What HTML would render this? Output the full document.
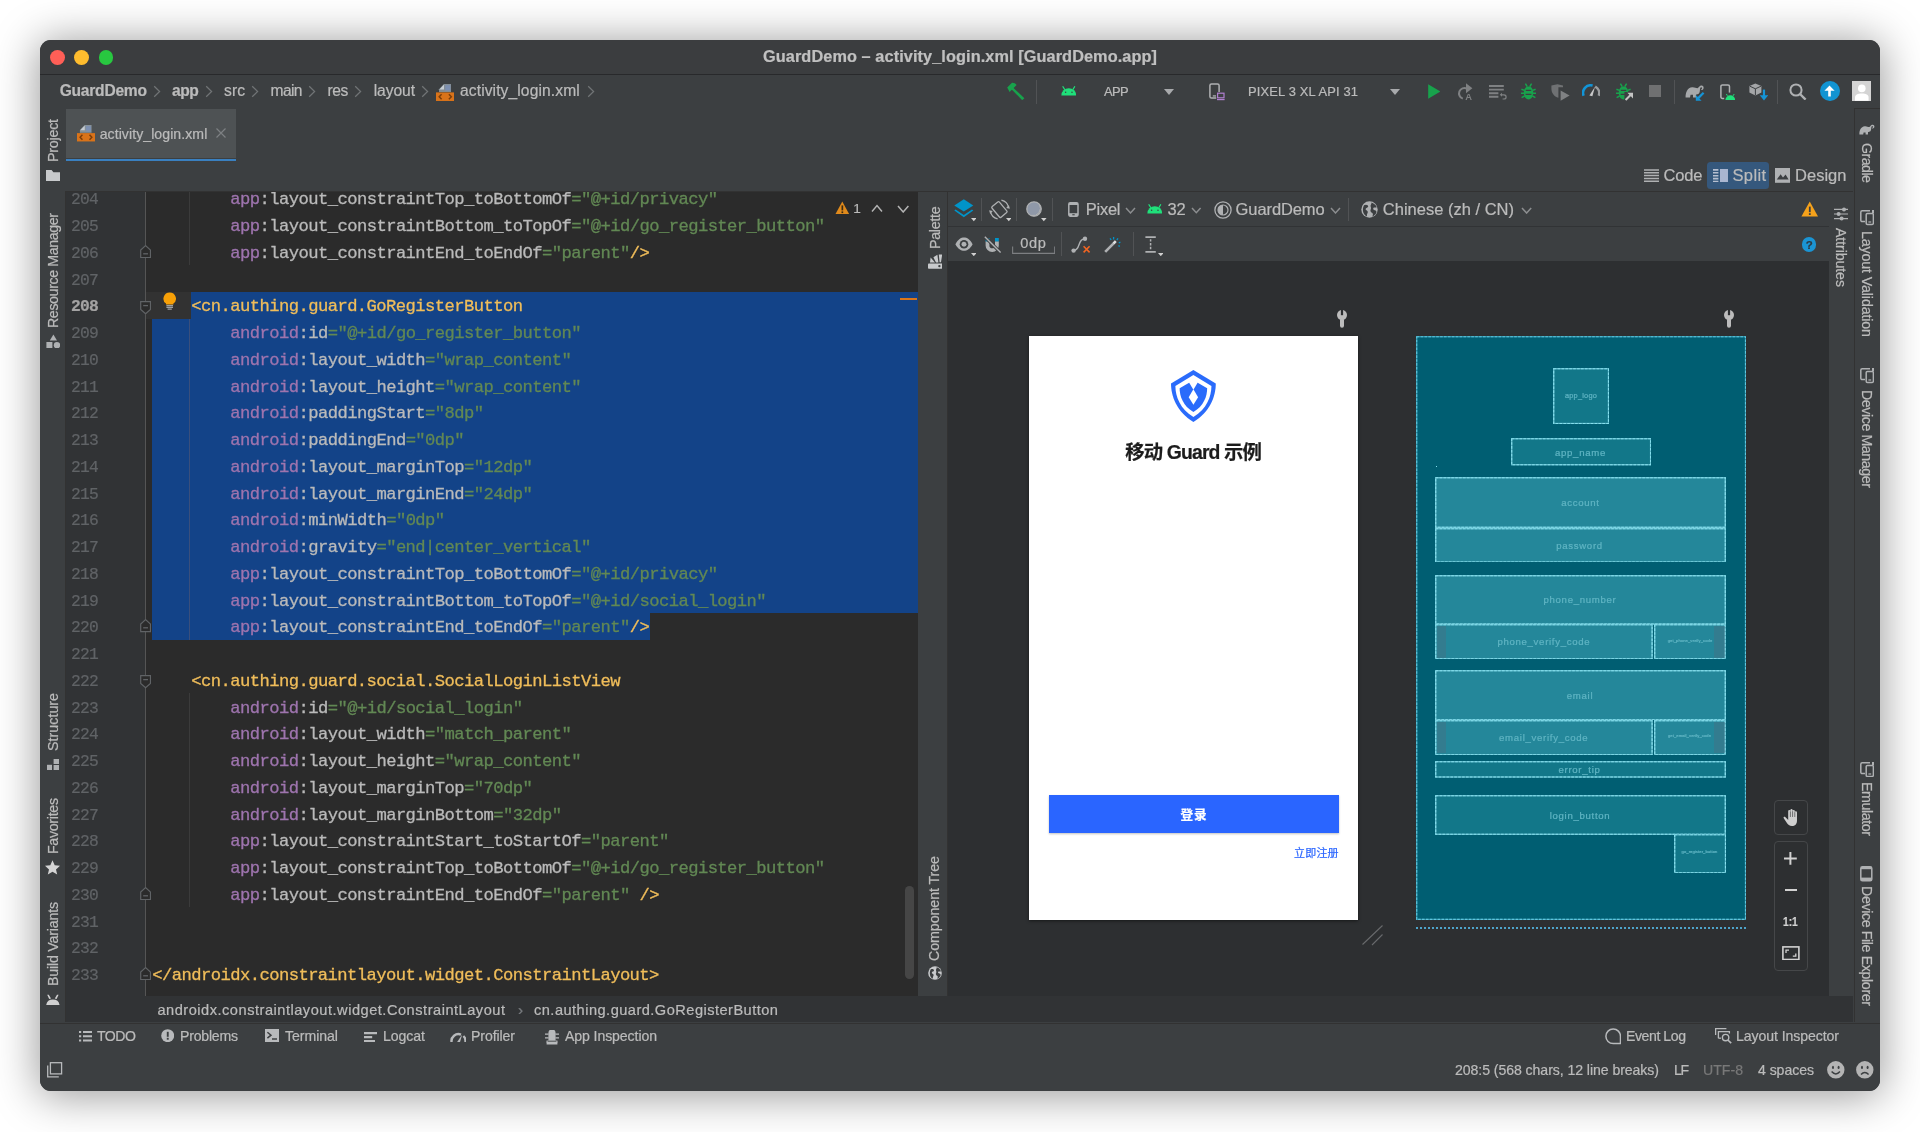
<!DOCTYPE html>
<html lang="en"><head><meta charset="utf-8"><title>GuardDemo – activity_login.xml [GuardDemo.app]</title>
<style>
html,body{margin:0;padding:0;background:#fff;}
body{width:1920px;height:1132px;position:relative;overflow:hidden;font-family:"Liberation Sans",sans-serif;}
.t{position:absolute;white-space:pre;line-height:1;-webkit-text-stroke:0.22px;}
.r{position:absolute;}
#win{position:absolute;left:40px;top:40px;width:1840px;height:1051px;border-radius:11px;background:#3c3f41;box-shadow:0 3px 44px 2px rgba(0,0,0,.40);}
#clip{position:absolute;left:40px;top:40px;width:1840px;height:1051px;border-radius:11px;overflow:hidden;}
#clip > .in{position:absolute;left:-40px;top:-40px;width:1920px;height:1132px;will-change:transform;}
</style></head><body>
<div id="win"></div>
<div id="clip"><div class="in">
<div class="r" style="left:40.00px;top:40.00px;width:1840.00px;height:34.00px;background:#3b3d3f;"></div>
<div class="r" style="left:40.00px;top:74.00px;width:1840.00px;height:1.00px;background:#28292b;"></div>
<div class="r" style="left:40.00px;top:75.00px;width:1840.00px;height:1016.00px;background:#3c3f41;"></div>
<div class="r" style="left:49.9px;top:49.9px;width:14.8px;height:14.8px;border-radius:50%;background:#ff5f57;"></div>
<div class="r" style="left:74.3px;top:49.9px;width:14.8px;height:14.8px;border-radius:50%;background:#febc2e;"></div>
<div class="r" style="left:98.7px;top:49.9px;width:14.8px;height:14.8px;border-radius:50%;background:#28c840;"></div>
<span class="t" style="left:763.00px;top:48.00px;font-size:16.3px;font-weight:700;color:#c0c0c0;font-family:'Liberation Sans', sans-serif;letter-spacing:0.090px;">GuardDemo – activity_login.xml [GuardDemo.app]</span>
<span class="t" style="left:59.70px;top:83.00px;font-size:15.6px;font-weight:700;color:#bbbbbb;font-family:'Liberation Sans', sans-serif;letter-spacing:-0.244px;">GuardDemo</span>
<span class="t" style="left:172.00px;top:83.00px;font-size:15.6px;font-weight:700;color:#bbbbbb;font-family:'Liberation Sans', sans-serif;letter-spacing:-0.517px;">app</span>
<span class="t" style="left:224.00px;top:83.00px;font-size:15.6px;font-weight:400;color:#bbbbbb;font-family:'Liberation Sans', sans-serif;letter-spacing:0.102px;">src</span>
<span class="t" style="left:270.60px;top:83.00px;font-size:15.6px;font-weight:400;color:#bbbbbb;font-family:'Liberation Sans', sans-serif;letter-spacing:-0.638px;">main</span>
<span class="t" style="left:327.50px;top:83.00px;font-size:15.6px;font-weight:400;color:#bbbbbb;font-family:'Liberation Sans', sans-serif;letter-spacing:-0.386px;">res</span>
<span class="t" style="left:373.70px;top:83.00px;font-size:15.6px;font-weight:400;color:#bbbbbb;font-family:'Liberation Sans', sans-serif;letter-spacing:-0.065px;">layout</span>
<span class="t" style="left:460.00px;top:83.00px;font-size:15.6px;font-weight:400;color:#bbbbbb;font-family:'Liberation Sans', sans-serif;letter-spacing:0.108px;">activity_login.xml</span>
<div class="r" style="left:66.00px;top:191.20px;width:851.50px;height:804.40px;background:#2b2b2b;"></div>
<div class="r" style="left:66.00px;top:191.20px;width:79.00px;height:804.40px;background:#313335;"></div>
<div class="r" style="left:145.00px;top:191.20px;width:1.40px;height:804.40px;background:#555555;"></div>
<div class="r" style="left:146.40px;top:291.90px;width:771.10px;height:26.75px;background:#323232;"></div>
<div class="r" style="left:191.25px;top:291.90px;width:726.25px;height:26.75px;background:#134388;"></div>
<div class="r" style="left:152.25px;top:318.64px;width:765.25px;height:294.19px;background:#134388;"></div>
<div class="r" style="left:152.25px;top:612.84px;width:497.25px;height:26.75px;background:#134388;"></div>
<div class="r" style="left:189.20px;top:191.20px;width:1.00px;height:73.95px;background:#3b3b3b;"></div>
<div class="r" style="left:189.20px;top:318.64px;width:1.00px;height:320.94px;background:#3a4f7c;"></div>
<div class="r" style="left:189.20px;top:693.08px;width:1.00px;height:213.96px;background:#3b3b3b;"></div>
<div class="r" style="left:66px;top:191.2px;width:851.5px;height:804.4px;overflow:hidden;"><div class="r" style="left:-66px;top:-191.2px;">
<span class="t" style="left:71px;top:192px;font-family:'Liberation Mono', monospace;font-size:16.3px;letter-spacing:-0.722px;color:#606366;">204</span>
<span class="t" style="left:230.25px;top:191px;font-family:'Liberation Mono', monospace;font-size:17.2px;letter-spacing:-0.572px;-webkit-text-stroke:0.3px;"><span style="color:#9e74ae">app</span><span style="color:#bababa">:layout_constraintTop_toBottomOf</span><span style="color:#628854">=&quot;@+id/privacy&quot;</span></span>
<span class="t" style="left:71px;top:219px;font-family:'Liberation Mono', monospace;font-size:16.3px;letter-spacing:-0.722px;color:#606366;">205</span>
<span class="t" style="left:230.25px;top:218px;font-family:'Liberation Mono', monospace;font-size:17.2px;letter-spacing:-0.572px;-webkit-text-stroke:0.3px;"><span style="color:#9e74ae">app</span><span style="color:#bababa">:layout_constraintBottom_toTopOf</span><span style="color:#628854">=&quot;@+id/go_register_button&quot;</span></span>
<span class="t" style="left:71px;top:246px;font-family:'Liberation Mono', monospace;font-size:16.3px;letter-spacing:-0.722px;color:#606366;">206</span>
<span class="t" style="left:230.25px;top:245px;font-family:'Liberation Mono', monospace;font-size:17.2px;letter-spacing:-0.572px;-webkit-text-stroke:0.3px;"><span style="color:#9e74ae">app</span><span style="color:#bababa">:layout_constraintEnd_toEndOf</span><span style="color:#628854">=&quot;parent&quot;</span><span style="color:#f0bd5a">/></span></span>
<span class="t" style="left:71px;top:273px;font-family:'Liberation Mono', monospace;font-size:16.3px;letter-spacing:-0.722px;color:#606366;">207</span>
<span class="t" style="left:71px;top:299px;font-family:'Liberation Mono', monospace;font-size:16.3px;letter-spacing:-0.722px;color:#a4a3a3;font-weight:700;">208</span>
<span class="t" style="left:191.25px;top:298px;font-family:'Liberation Mono', monospace;font-size:17.2px;letter-spacing:-0.572px;-webkit-text-stroke:0.3px;"><span style="color:#f0bd5a">&lt;cn.authing.guard.GoRegisterButton</span></span>
<span class="t" style="left:71px;top:326px;font-family:'Liberation Mono', monospace;font-size:16.3px;letter-spacing:-0.722px;color:#606366;">209</span>
<span class="t" style="left:230.25px;top:325px;font-family:'Liberation Mono', monospace;font-size:17.2px;letter-spacing:-0.572px;-webkit-text-stroke:0.3px;"><span style="color:#9e74ae">android</span><span style="color:#bababa">:id</span><span style="color:#628854">=&quot;@+id/go_register_button&quot;</span></span>
<span class="t" style="left:71px;top:353px;font-family:'Liberation Mono', monospace;font-size:16.3px;letter-spacing:-0.722px;color:#606366;">210</span>
<span class="t" style="left:230.25px;top:352px;font-family:'Liberation Mono', monospace;font-size:17.2px;letter-spacing:-0.572px;-webkit-text-stroke:0.3px;"><span style="color:#9e74ae">android</span><span style="color:#bababa">:layout_width</span><span style="color:#628854">=&quot;wrap_content&quot;</span></span>
<span class="t" style="left:71px;top:380px;font-family:'Liberation Mono', monospace;font-size:16.3px;letter-spacing:-0.722px;color:#606366;">211</span>
<span class="t" style="left:230.25px;top:379px;font-family:'Liberation Mono', monospace;font-size:17.2px;letter-spacing:-0.572px;-webkit-text-stroke:0.3px;"><span style="color:#9e74ae">android</span><span style="color:#bababa">:layout_height</span><span style="color:#628854">=&quot;wrap_content&quot;</span></span>
<span class="t" style="left:71px;top:406px;font-family:'Liberation Mono', monospace;font-size:16.3px;letter-spacing:-0.722px;color:#606366;">212</span>
<span class="t" style="left:230.25px;top:405px;font-family:'Liberation Mono', monospace;font-size:17.2px;letter-spacing:-0.572px;-webkit-text-stroke:0.3px;"><span style="color:#9e74ae">android</span><span style="color:#bababa">:paddingStart</span><span style="color:#628854">=&quot;8dp&quot;</span></span>
<span class="t" style="left:71px;top:433px;font-family:'Liberation Mono', monospace;font-size:16.3px;letter-spacing:-0.722px;color:#606366;">213</span>
<span class="t" style="left:230.25px;top:432px;font-family:'Liberation Mono', monospace;font-size:17.2px;letter-spacing:-0.572px;-webkit-text-stroke:0.3px;"><span style="color:#9e74ae">android</span><span style="color:#bababa">:paddingEnd</span><span style="color:#628854">=&quot;0dp&quot;</span></span>
<span class="t" style="left:71px;top:460px;font-family:'Liberation Mono', monospace;font-size:16.3px;letter-spacing:-0.722px;color:#606366;">214</span>
<span class="t" style="left:230.25px;top:459px;font-family:'Liberation Mono', monospace;font-size:17.2px;letter-spacing:-0.572px;-webkit-text-stroke:0.3px;"><span style="color:#9e74ae">android</span><span style="color:#bababa">:layout_marginTop</span><span style="color:#628854">=&quot;12dp&quot;</span></span>
<span class="t" style="left:71px;top:487px;font-family:'Liberation Mono', monospace;font-size:16.3px;letter-spacing:-0.722px;color:#606366;">215</span>
<span class="t" style="left:230.25px;top:486px;font-family:'Liberation Mono', monospace;font-size:17.2px;letter-spacing:-0.572px;-webkit-text-stroke:0.3px;"><span style="color:#9e74ae">android</span><span style="color:#bababa">:layout_marginEnd</span><span style="color:#628854">=&quot;24dp&quot;</span></span>
<span class="t" style="left:71px;top:513px;font-family:'Liberation Mono', monospace;font-size:16.3px;letter-spacing:-0.722px;color:#606366;">216</span>
<span class="t" style="left:230.25px;top:512px;font-family:'Liberation Mono', monospace;font-size:17.2px;letter-spacing:-0.572px;-webkit-text-stroke:0.3px;"><span style="color:#9e74ae">android</span><span style="color:#bababa">:minWidth</span><span style="color:#628854">=&quot;0dp&quot;</span></span>
<span class="t" style="left:71px;top:540px;font-family:'Liberation Mono', monospace;font-size:16.3px;letter-spacing:-0.722px;color:#606366;">217</span>
<span class="t" style="left:230.25px;top:539px;font-family:'Liberation Mono', monospace;font-size:17.2px;letter-spacing:-0.572px;-webkit-text-stroke:0.3px;"><span style="color:#9e74ae">android</span><span style="color:#bababa">:gravity</span><span style="color:#628854">=&quot;end|center_vertical&quot;</span></span>
<span class="t" style="left:71px;top:567px;font-family:'Liberation Mono', monospace;font-size:16.3px;letter-spacing:-0.722px;color:#606366;">218</span>
<span class="t" style="left:230.25px;top:566px;font-family:'Liberation Mono', monospace;font-size:17.2px;letter-spacing:-0.572px;-webkit-text-stroke:0.3px;"><span style="color:#9e74ae">app</span><span style="color:#bababa">:layout_constraintTop_toBottomOf</span><span style="color:#628854">=&quot;@+id/privacy&quot;</span></span>
<span class="t" style="left:71px;top:594px;font-family:'Liberation Mono', monospace;font-size:16.3px;letter-spacing:-0.722px;color:#606366;">219</span>
<span class="t" style="left:230.25px;top:593px;font-family:'Liberation Mono', monospace;font-size:17.2px;letter-spacing:-0.572px;-webkit-text-stroke:0.3px;"><span style="color:#9e74ae">app</span><span style="color:#bababa">:layout_constraintBottom_toTopOf</span><span style="color:#628854">=&quot;@+id/social_login&quot;</span></span>
<span class="t" style="left:71px;top:620px;font-family:'Liberation Mono', monospace;font-size:16.3px;letter-spacing:-0.722px;color:#606366;">220</span>
<span class="t" style="left:230.25px;top:619px;font-family:'Liberation Mono', monospace;font-size:17.2px;letter-spacing:-0.572px;-webkit-text-stroke:0.3px;"><span style="color:#9e74ae">app</span><span style="color:#bababa">:layout_constraintEnd_toEndOf</span><span style="color:#628854">=&quot;parent&quot;</span><span style="color:#f0bd5a">/></span></span>
<span class="t" style="left:71px;top:647px;font-family:'Liberation Mono', monospace;font-size:16.3px;letter-spacing:-0.722px;color:#606366;">221</span>
<span class="t" style="left:71px;top:674px;font-family:'Liberation Mono', monospace;font-size:16.3px;letter-spacing:-0.722px;color:#606366;">222</span>
<span class="t" style="left:191.25px;top:673px;font-family:'Liberation Mono', monospace;font-size:17.2px;letter-spacing:-0.572px;-webkit-text-stroke:0.3px;"><span style="color:#f0bd5a">&lt;cn.authing.guard.social.SocialLoginListView</span></span>
<span class="t" style="left:71px;top:701px;font-family:'Liberation Mono', monospace;font-size:16.3px;letter-spacing:-0.722px;color:#606366;">223</span>
<span class="t" style="left:230.25px;top:700px;font-family:'Liberation Mono', monospace;font-size:17.2px;letter-spacing:-0.572px;-webkit-text-stroke:0.3px;"><span style="color:#9e74ae">android</span><span style="color:#bababa">:id</span><span style="color:#628854">=&quot;@+id/social_login&quot;</span></span>
<span class="t" style="left:71px;top:727px;font-family:'Liberation Mono', monospace;font-size:16.3px;letter-spacing:-0.722px;color:#606366;">224</span>
<span class="t" style="left:230.25px;top:726px;font-family:'Liberation Mono', monospace;font-size:17.2px;letter-spacing:-0.572px;-webkit-text-stroke:0.3px;"><span style="color:#9e74ae">android</span><span style="color:#bababa">:layout_width</span><span style="color:#628854">=&quot;match_parent&quot;</span></span>
<span class="t" style="left:71px;top:754px;font-family:'Liberation Mono', monospace;font-size:16.3px;letter-spacing:-0.722px;color:#606366;">225</span>
<span class="t" style="left:230.25px;top:753px;font-family:'Liberation Mono', monospace;font-size:17.2px;letter-spacing:-0.572px;-webkit-text-stroke:0.3px;"><span style="color:#9e74ae">android</span><span style="color:#bababa">:layout_height</span><span style="color:#628854">=&quot;wrap_content&quot;</span></span>
<span class="t" style="left:71px;top:781px;font-family:'Liberation Mono', monospace;font-size:16.3px;letter-spacing:-0.722px;color:#606366;">226</span>
<span class="t" style="left:230.25px;top:780px;font-family:'Liberation Mono', monospace;font-size:17.2px;letter-spacing:-0.572px;-webkit-text-stroke:0.3px;"><span style="color:#9e74ae">android</span><span style="color:#bababa">:layout_marginTop</span><span style="color:#628854">=&quot;70dp&quot;</span></span>
<span class="t" style="left:71px;top:808px;font-family:'Liberation Mono', monospace;font-size:16.3px;letter-spacing:-0.722px;color:#606366;">227</span>
<span class="t" style="left:230.25px;top:807px;font-family:'Liberation Mono', monospace;font-size:17.2px;letter-spacing:-0.572px;-webkit-text-stroke:0.3px;"><span style="color:#9e74ae">android</span><span style="color:#bababa">:layout_marginBottom</span><span style="color:#628854">=&quot;32dp&quot;</span></span>
<span class="t" style="left:71px;top:834px;font-family:'Liberation Mono', monospace;font-size:16.3px;letter-spacing:-0.722px;color:#606366;">228</span>
<span class="t" style="left:230.25px;top:833px;font-family:'Liberation Mono', monospace;font-size:17.2px;letter-spacing:-0.572px;-webkit-text-stroke:0.3px;"><span style="color:#9e74ae">app</span><span style="color:#bababa">:layout_constraintStart_toStartOf</span><span style="color:#628854">=&quot;parent&quot;</span></span>
<span class="t" style="left:71px;top:861px;font-family:'Liberation Mono', monospace;font-size:16.3px;letter-spacing:-0.722px;color:#606366;">229</span>
<span class="t" style="left:230.25px;top:860px;font-family:'Liberation Mono', monospace;font-size:17.2px;letter-spacing:-0.572px;-webkit-text-stroke:0.3px;"><span style="color:#9e74ae">app</span><span style="color:#bababa">:layout_constraintTop_toBottomOf</span><span style="color:#628854">=&quot;@+id/go_register_button&quot;</span></span>
<span class="t" style="left:71px;top:888px;font-family:'Liberation Mono', monospace;font-size:16.3px;letter-spacing:-0.722px;color:#606366;">230</span>
<span class="t" style="left:230.25px;top:887px;font-family:'Liberation Mono', monospace;font-size:17.2px;letter-spacing:-0.572px;-webkit-text-stroke:0.3px;"><span style="color:#9e74ae">app</span><span style="color:#bababa">:layout_constraintEnd_toEndOf</span><span style="color:#628854">=&quot;parent&quot;</span><span style="color:#f0bd5a"> /></span></span>
<span class="t" style="left:71px;top:915px;font-family:'Liberation Mono', monospace;font-size:16.3px;letter-spacing:-0.722px;color:#606366;">231</span>
<span class="t" style="left:71px;top:941px;font-family:'Liberation Mono', monospace;font-size:16.3px;letter-spacing:-0.722px;color:#606366;">232</span>
<span class="t" style="left:71px;top:968px;font-family:'Liberation Mono', monospace;font-size:16.3px;letter-spacing:-0.722px;color:#606366;">233</span>
<span class="t" style="left:152.25px;top:967px;font-family:'Liberation Mono', monospace;font-size:17.2px;letter-spacing:-0.572px;-webkit-text-stroke:0.3px;"><span style="color:#f0bd5a">&lt;/androidx.constraintlayout.widget.ConstraintLayout&gt;</span></span>
</div></div>
<div class="r" style="left:40.00px;top:109.00px;width:25.50px;height:913.50px;background:#3c3f41;"></div>
<div class="r" style="left:65.30px;top:191.20px;width:1.00px;height:831.30px;background:#323232;"></div>
<span class="t" style="left:52.50px;top:162.00px;font-size:14.2px;font-weight:400;color:#bbbbbb;letter-spacing:-0.193px;line-height:14.2px;transform-origin:0 0;transform:rotate(-90deg) translateY(-50%);">Project</span>
<span class="t" style="left:52.50px;top:327.50px;font-size:14.2px;font-weight:400;color:#bbbbbb;letter-spacing:-0.377px;line-height:14.2px;transform-origin:0 0;transform:rotate(-90deg) translateY(-50%);">Resource Manager</span>
<span class="t" style="left:52.50px;top:751.00px;font-size:14.2px;font-weight:400;color:#bbbbbb;letter-spacing:0.055px;line-height:14.2px;transform-origin:0 0;transform:rotate(-90deg) translateY(-50%);">Structure</span>
<span class="t" style="left:52.50px;top:854.00px;font-size:14.2px;font-weight:400;color:#bbbbbb;letter-spacing:-0.293px;line-height:14.2px;transform-origin:0 0;transform:rotate(-90deg) translateY(-50%);">Favorites</span>
<span class="t" style="left:52.50px;top:986.00px;font-size:14.2px;font-weight:400;color:#bbbbbb;letter-spacing:-0.191px;line-height:14.2px;transform-origin:0 0;transform:rotate(-90deg) translateY(-50%);">Build Variants</span>
<div class="r" style="left:1854.00px;top:108.40px;width:26.00px;height:0.80px;background:#323232;"></div>
<div class="r" style="left:66.30px;top:109.20px;width:169.70px;height:49.10px;background:#4e5254;"></div>
<div class="r" style="left:66.30px;top:158.50px;width:169.70px;height:2.10px;background:#3a80c0;"></div>
<span class="t" style="left:99.70px;top:127.00px;font-size:14.1px;font-weight:400;color:#bbbbbb;font-family:'Liberation Sans', sans-serif;letter-spacing:0.063px;">activity_login.xml</span>
<svg class="r" style="left:215.00px;top:127.00px;" width="12" height="12" viewBox="0 0 12 12"><path d="M1.5 1.5L10.5 10.5M10.5 1.5L1.5 10.5" stroke="#7d8083" stroke-width="1.2" fill="none"/></svg>
<div class="r" style="left:1707.00px;top:161.80px;width:62.00px;height:26.80px;background:#35587d;border-radius:3.5px;"></div>
<span class="t" style="left:1663.50px;top:167.00px;font-size:16.5px;font-weight:400;color:#bbbbbb;font-family:'Liberation Sans', sans-serif;letter-spacing:-0.151px;">Code</span>
<span class="t" style="left:1732.50px;top:167.00px;font-size:16.5px;font-weight:400;color:#bbbbbb;font-family:'Liberation Sans', sans-serif;letter-spacing:0.348px;">Split</span>
<span class="t" style="left:1795.00px;top:167.00px;font-size:16.5px;font-weight:400;color:#bbbbbb;font-family:'Liberation Sans', sans-serif;letter-spacing:0.025px;">Design</span>
<div class="r" style="left:917.50px;top:191.20px;width:29.00px;height:804.40px;background:#3c3f41;"></div>
<div class="r" style="left:946.50px;top:191.20px;width:1.00px;height:804.40px;background:#323232;"></div>
<span class="t" style="left:934.60px;top:248.70px;font-size:14.2px;font-weight:400;color:#bbbbbb;letter-spacing:-0.245px;line-height:14.2px;transform-origin:0 0;transform:rotate(-90deg) translateY(-50%);">Palette</span>
<span class="t" style="left:934.00px;top:961.00px;font-size:14.2px;font-weight:400;color:#bbbbbb;letter-spacing:-0.053px;line-height:14.2px;transform-origin:0 0;transform:rotate(-90deg) translateY(-50%);">Component Tree</span>
<div class="r" style="left:947.50px;top:191.20px;width:881.00px;height:35.30px;background:#3c3f41;"></div>
<div class="r" style="left:947.50px;top:225.80px;width:881.00px;height:1.50px;background:#313335;"></div>
<div class="r" style="left:947.50px;top:227.30px;width:881.00px;height:33.70px;background:#3c3f41;"></div>
<div class="r" style="left:947.50px;top:261.00px;width:881.00px;height:734.60px;background:#2d2f31;"></div>
<div class="r" style="left:1828.50px;top:191.20px;width:0.80px;height:804.40px;background:#323232;"></div>
<div class="r" style="left:1829.30px;top:191.20px;width:24.20px;height:804.40px;background:#3c3f41;"></div>
<div class="r" style="left:1853.50px;top:109.20px;width:0.90px;height:913.30px;background:#323232;"></div>
<span class="t" style="left:1840.60px;top:228.00px;font-size:14.2px;font-weight:400;color:#bbbbbb;letter-spacing:-0.104px;line-height:14.2px;transform-origin:0 0;transform:rotate(90deg) translateY(-50%);">Attributes</span>
<span class="t" style="left:1867.00px;top:143.00px;font-size:14.2px;font-weight:400;color:#bbbbbb;letter-spacing:-0.519px;line-height:14.2px;transform-origin:0 0;transform:rotate(90deg) translateY(-50%);">Gradle</span>
<span class="t" style="left:1867.00px;top:231.00px;font-size:14.2px;font-weight:400;color:#bbbbbb;letter-spacing:-0.113px;line-height:14.2px;transform-origin:0 0;transform:rotate(90deg) translateY(-50%);">Layout Validation</span>
<span class="t" style="left:1867.00px;top:390.00px;font-size:14.2px;font-weight:400;color:#bbbbbb;letter-spacing:-0.409px;line-height:14.2px;transform-origin:0 0;transform:rotate(90deg) translateY(-50%);">Device Manager</span>
<span class="t" style="left:1867.00px;top:782.00px;font-size:14.2px;font-weight:400;color:#bbbbbb;letter-spacing:-0.397px;line-height:14.2px;transform-origin:0 0;transform:rotate(90deg) translateY(-50%);">Emulator</span>
<span class="t" style="left:1867.00px;top:886.00px;font-size:14.2px;font-weight:400;color:#bbbbbb;letter-spacing:-0.366px;line-height:14.2px;transform-origin:0 0;transform:rotate(90deg) translateY(-50%);">Device File Explorer</span>
<div class="r" style="left:66.30px;top:995.60px;width:1787.20px;height:26.90px;background:#313335;"></div>
<span class="t" style="left:157.40px;top:1003.00px;font-size:14.6px;font-weight:400;color:#bbbbbb;font-family:'Liberation Sans', sans-serif;letter-spacing:0.515px;">androidx.constraintlayout.widget.ConstraintLayout</span>
<span class="t" style="left:534.00px;top:1003.00px;font-size:14.6px;font-weight:400;color:#bbbbbb;font-family:'Liberation Sans', sans-serif;letter-spacing:0.475px;">cn.authing.guard.GoRegisterButton</span>
<span class="t" style="left:518.00px;top:1002.00px;font-size:15.3px;font-weight:400;color:#7a7d80;font-family:'Liberation Sans', sans-serif;letter-spacing:0.000px;">›</span>
<div class="r" style="left:40.00px;top:1022.50px;width:1840.00px;height:0.80px;background:#323232;"></div>
<span class="t" style="left:97.00px;top:1029.00px;font-size:14.1px;font-weight:400;color:#bbbbbb;font-family:'Liberation Sans', sans-serif;letter-spacing:-0.490px;">TODO</span>
<span class="t" style="left:180.00px;top:1029.00px;font-size:14.1px;font-weight:400;color:#bbbbbb;font-family:'Liberation Sans', sans-serif;letter-spacing:-0.219px;">Problems</span>
<span class="t" style="left:285.00px;top:1029.00px;font-size:14.1px;font-weight:400;color:#bbbbbb;font-family:'Liberation Sans', sans-serif;letter-spacing:-0.038px;">Terminal</span>
<span class="t" style="left:383.00px;top:1029.00px;font-size:14.1px;font-weight:400;color:#bbbbbb;font-family:'Liberation Sans', sans-serif;letter-spacing:-0.066px;">Logcat</span>
<span class="t" style="left:471.00px;top:1029.00px;font-size:14.1px;font-weight:400;color:#bbbbbb;font-family:'Liberation Sans', sans-serif;letter-spacing:-0.094px;">Profiler</span>
<span class="t" style="left:565.00px;top:1029.00px;font-size:14.1px;font-weight:400;color:#bbbbbb;font-family:'Liberation Sans', sans-serif;letter-spacing:-0.096px;">App Inspection</span>
<span class="t" style="left:1626.00px;top:1029.00px;font-size:14.1px;font-weight:400;color:#bbbbbb;font-family:'Liberation Sans', sans-serif;letter-spacing:-0.436px;">Event Log</span>
<span class="t" style="left:1736.00px;top:1029.00px;font-size:14.1px;font-weight:400;color:#bbbbbb;font-family:'Liberation Sans', sans-serif;letter-spacing:-0.080px;">Layout Inspector</span>
<span class="t" style="left:1455.00px;top:1063.00px;font-size:14.1px;font-weight:400;color:#bbbbbb;font-family:'Liberation Sans', sans-serif;letter-spacing:-0.064px;">208:5 (568 chars, 12 line breaks)</span>
<span class="t" style="left:1674.00px;top:1063.00px;font-size:14.1px;font-weight:400;color:#bbbbbb;font-family:'Liberation Sans', sans-serif;letter-spacing:-1.453px;">LF</span>
<span class="t" style="left:1703.00px;top:1063.00px;font-size:14.1px;font-weight:400;color:#787878;font-family:'Liberation Sans', sans-serif;letter-spacing:0.016px;">UTF-8</span>
<span class="t" style="left:1758.00px;top:1063.00px;font-size:14.1px;font-weight:400;color:#bbbbbb;font-family:'Liberation Sans', sans-serif;letter-spacing:-0.060px;">4 spaces</span>
<div class="r" style="left:1029.00px;top:336.30px;width:329.30px;height:584.10px;background:#ffffff;box-shadow:0 1px 3px rgba(0,0,0,.5);"></div>
<svg class="r" style="left:1171.20px;top:369.80px;" width="44.8" height="52" viewBox="620 172 390 453"><path d="M815 172L1010 290C1010 400 960 540 815 625C670 540 620 400 620 290Z" fill="#2a6bfb"/>
<path d="M815 216L972 311C972 400 932 512 815 581C698 512 658 400 658 311Z" fill="#fff"/>
<path d="M815 262L935 332C935 400 905 488 815 538C725 488 695 400 695 332Z" fill="#2a6bfb"/>
<path d="M776 278L815 345L854 278L815 250Z" fill="#fff"/>
<path d="M815 340L856 410L815 474L774 410Z" fill="#fff"/></svg>
<span class="t" style="left:1125.30px;top:443.00px;font-size:19.4px;font-weight:700;color:#1c1c1c;font-family:'Liberation Sans', 'Noto Sans CJK SC', sans-serif;letter-spacing:-0.875px;">移动 Guard 示例</span>
<div class="r" style="left:1048.60px;top:795.40px;width:290.20px;height:38.00px;background:#2a65ff;box-shadow:0 1px 2px rgba(0,0,0,.25);"></div>
<span class="t" style="left:1180.50px;top:809.00px;font-size:12.6px;font-weight:700;color:#ffffff;font-family:'Liberation Sans', 'Noto Sans CJK SC', sans-serif;letter-spacing:0.812px;">登录</span>
<span class="t" style="left:1294.00px;top:848.00px;font-size:11px;font-weight:400;color:#2a65ff;font-family:'Liberation Sans', 'Noto Sans CJK SC', sans-serif;letter-spacing:0.200px;">立即注册</span>
<svg class="r" style="left:1337.20px;top:309.50px;" width="10" height="18" viewBox="0 0 10 18"><circle cx="5" cy="5.1" r="5" fill="#bcbcbc"/><rect x="3.9" y="-1" width="2.2" height="6.2" fill="#2d2f31"/><rect x="3" y="8" width="4" height="9.8" rx="2" fill="#bcbcbc"/></svg>
<svg class="r" style="left:1723.90px;top:309.50px;" width="10" height="18" viewBox="0 0 10 18"><circle cx="5" cy="5.1" r="5" fill="#bcbcbc"/><rect x="3.9" y="-1" width="2.2" height="6.2" fill="#2d2f31"/><rect x="3" y="8" width="4" height="9.8" rx="2" fill="#bcbcbc"/></svg>
<svg class="r" style="left:1360.00px;top:923.00px;" width="26" height="26" viewBox="0 0 26 26"><path d="M2.5 21.5L22.5 2.5M12 22L22.5 11.5" stroke="#686a6c" stroke-width="1.1" fill="none"/></svg>
<div class="r" style="left:1415.80px;top:336.30px;width:330.20px;height:584.10px;background:#005e72;"></div>
<svg class="r" style="left:1415.8px;top:336.3px;" width="330.2" height="584.1"><rect x="0.7" y="0.7" width="328.8" height="582.7" fill="none" stroke="rgba(80,180,205,.6)" stroke-width="1.3"/><rect x="0.7" y="0.7" width="328.8" height="582.7" fill="none" stroke="#5fc6de" stroke-width="1.1" stroke-dasharray="2.6 1.3"/></svg>
<svg class="r" style="left:1553.20px;top:367.90px;" width="56.20" height="56.20"><rect x="0" y="0" width="56.20" height="56.20" fill="#127789"/><rect x="0.7" y="0.7" width="54.80" height="54.80" fill="none" stroke="rgba(150,232,245,.55)" stroke-width="1.4"/><rect x="0.7" y="0.7" width="54.80" height="54.80" fill="none" stroke="#86e0ee" stroke-width="1.1" stroke-dasharray="2.6 1.3"/></svg>
<span class="t" style="left:1431.00px;width:300px;text-align:center;top:391.86px;font-size:7.4px;color:#5fb4c3;letter-spacing:0.2px;">app_logo</span>
<svg class="r" style="left:1510.60px;top:438.40px;" width="140.30" height="27.40"><rect x="0" y="0" width="140.30" height="27.40" fill="#127789"/><rect x="0.7" y="0.7" width="138.90" height="26.00" fill="none" stroke="rgba(150,232,245,.55)" stroke-width="1.4"/><rect x="0.7" y="0.7" width="138.90" height="26.00" fill="none" stroke="#86e0ee" stroke-width="1.1" stroke-dasharray="2.6 1.3"/></svg>
<span class="t" style="left:1430.50px;width:300px;text-align:center;top:447.62px;font-size:9.6px;color:#5fb4c3;letter-spacing:0.7px;">app_name</span>
<svg class="r" style="left:1435.20px;top:477.40px;" width="291.00" height="51.00"><rect x="0" y="0" width="291.00" height="51.00" fill="#24879a"/><rect x="0.7" y="0.7" width="289.60" height="49.60" fill="none" stroke="rgba(150,232,245,.55)" stroke-width="1.4"/><rect x="0.7" y="0.7" width="289.60" height="49.60" fill="none" stroke="#86e0ee" stroke-width="1.1" stroke-dasharray="2.6 1.3"/></svg>
<span class="t" style="left:1430.50px;width:300px;text-align:center;top:497.92px;font-size:9.6px;color:#5fb4c3;letter-spacing:0.7px;">account</span>
<svg class="r" style="left:1435.20px;top:527.60px;" width="291.00" height="34.70"><rect x="0" y="0" width="291.00" height="34.70" fill="#24879a"/><rect x="0.7" y="0.7" width="289.60" height="33.30" fill="none" stroke="rgba(150,232,245,.55)" stroke-width="1.4"/><rect x="0.7" y="0.7" width="289.60" height="33.30" fill="none" stroke="#86e0ee" stroke-width="1.1" stroke-dasharray="2.6 1.3"/></svg>
<span class="t" style="left:1429.50px;width:300px;text-align:center;top:540.62px;font-size:9.6px;color:#5fb4c3;letter-spacing:0.7px;">password</span>
<svg class="r" style="left:1435.20px;top:575.00px;" width="291.00" height="49.70"><rect x="0" y="0" width="291.00" height="49.70" fill="#24879a"/><rect x="0.7" y="0.7" width="289.60" height="48.30" fill="none" stroke="rgba(150,232,245,.55)" stroke-width="1.4"/><rect x="0.7" y="0.7" width="289.60" height="48.30" fill="none" stroke="#86e0ee" stroke-width="1.1" stroke-dasharray="2.6 1.3"/></svg>
<span class="t" style="left:1430.00px;width:300px;text-align:center;top:595.42px;font-size:9.6px;color:#5fb4c3;letter-spacing:0.7px;">phone_number</span>
<svg class="r" style="left:1435.20px;top:623.90px;" width="217.80" height="35.50"><rect x="0" y="0" width="217.80" height="35.50" fill="#24879a"/><rect x="0.7" y="0.7" width="216.40" height="34.10" fill="none" stroke="rgba(150,232,245,.55)" stroke-width="1.4"/><rect x="0.7" y="0.7" width="216.40" height="34.10" fill="none" stroke="#86e0ee" stroke-width="1.1" stroke-dasharray="2.6 1.3"/></svg>
<span class="t" style="left:1393.90px;width:300px;text-align:center;top:637.12px;font-size:9.6px;color:#5fb4c3;letter-spacing:0.7px;">phone_verify_code</span>
<svg class="r" style="left:1654.40px;top:623.90px;" width="71.80" height="35.50"><rect x="0" y="0" width="71.80" height="35.50" fill="#24879a"/><rect x="0.7" y="0.7" width="70.40" height="34.10" fill="none" stroke="rgba(150,232,245,.55)" stroke-width="1.4"/><rect x="0.7" y="0.7" width="70.40" height="34.10" fill="none" stroke="#86e0ee" stroke-width="1.1" stroke-dasharray="2.6 1.3"/></svg>
<span class="t" style="left:1540.00px;width:300px;text-align:center;top:638.70px;font-size:4.1px;color:#5fb4c3;letter-spacing:0.1px;">get_phone_verify_code</span>
<div class="r" style="left:1437.00px;top:626.00px;width:9.00px;height:32.00px;background:rgba(70,110,130,.45);"></div>
<div class="r" style="left:1714.00px;top:626.00px;width:10.50px;height:32.00px;background:rgba(70,110,130,.45);"></div>
<svg class="r" style="left:1435.20px;top:669.70px;" width="291.00" height="50.60"><rect x="0" y="0" width="291.00" height="50.60" fill="#24879a"/><rect x="0.7" y="0.7" width="289.60" height="49.20" fill="none" stroke="rgba(150,232,245,.55)" stroke-width="1.4"/><rect x="0.7" y="0.7" width="289.60" height="49.20" fill="none" stroke="#86e0ee" stroke-width="1.1" stroke-dasharray="2.6 1.3"/></svg>
<span class="t" style="left:1430.00px;width:300px;text-align:center;top:690.62px;font-size:9.6px;color:#5fb4c3;letter-spacing:0.7px;">email</span>
<svg class="r" style="left:1435.20px;top:719.50px;" width="217.80" height="35.40"><rect x="0" y="0" width="217.80" height="35.40" fill="#24879a"/><rect x="0.7" y="0.7" width="216.40" height="34.00" fill="none" stroke="rgba(150,232,245,.55)" stroke-width="1.4"/><rect x="0.7" y="0.7" width="216.40" height="34.00" fill="none" stroke="#86e0ee" stroke-width="1.1" stroke-dasharray="2.6 1.3"/></svg>
<span class="t" style="left:1393.70px;width:300px;text-align:center;top:733.12px;font-size:9.6px;color:#5fb4c3;letter-spacing:0.7px;">email_verify_code</span>
<svg class="r" style="left:1654.40px;top:719.50px;" width="71.80" height="35.40"><rect x="0" y="0" width="71.80" height="35.40" fill="#24879a"/><rect x="0.7" y="0.7" width="70.40" height="34.00" fill="none" stroke="rgba(150,232,245,.55)" stroke-width="1.4"/><rect x="0.7" y="0.7" width="70.40" height="34.00" fill="none" stroke="#86e0ee" stroke-width="1.1" stroke-dasharray="2.6 1.3"/></svg>
<span class="t" style="left:1539.50px;width:300px;text-align:center;top:734.40px;font-size:4.1px;color:#5fb4c3;letter-spacing:0.1px;">get_email_verify_code</span>
<div class="r" style="left:1437.00px;top:721.50px;width:9.00px;height:31.50px;background:rgba(70,110,130,.45);"></div>
<div class="r" style="left:1714.00px;top:721.50px;width:10.50px;height:31.50px;background:rgba(70,110,130,.45);"></div>
<svg class="r" style="left:1435.20px;top:761.00px;" width="291.00" height="16.70"><rect x="0" y="0" width="291.00" height="16.70" fill="#127789"/><rect x="0.7" y="0.7" width="289.60" height="15.30" fill="none" stroke="rgba(150,232,245,.55)" stroke-width="1.4"/><rect x="0.7" y="0.7" width="289.60" height="15.30" fill="none" stroke="#86e0ee" stroke-width="1.1" stroke-dasharray="2.6 1.3"/></svg>
<span class="t" style="left:1429.50px;width:300px;text-align:center;top:764.62px;font-size:9.6px;color:#5fb4c3;letter-spacing:0.7px;">error_tip</span>
<svg class="r" style="left:1435.20px;top:795.00px;" width="291.00" height="40.00"><rect x="0" y="0" width="291.00" height="40.00" fill="#127789"/><rect x="0.7" y="0.7" width="289.60" height="38.60" fill="none" stroke="rgba(150,232,245,.55)" stroke-width="1.4"/><rect x="0.7" y="0.7" width="289.60" height="38.60" fill="none" stroke="#86e0ee" stroke-width="1.1" stroke-dasharray="2.6 1.3"/></svg>
<span class="t" style="left:1430.00px;width:300px;text-align:center;top:810.62px;font-size:9.6px;color:#5fb4c3;letter-spacing:0.7px;">login_button</span>
<svg class="r" style="left:1674.00px;top:833.50px;" width="52.20" height="39.50"><rect x="0" y="0" width="52.20" height="39.50" fill="#127789"/><rect x="0.7" y="0.7" width="50.80" height="38.10" fill="none" stroke="rgba(150,232,245,.55)" stroke-width="1.4"/><rect x="0.7" y="0.7" width="50.80" height="38.10" fill="none" stroke="#86e0ee" stroke-width="1.1" stroke-dasharray="2.6 1.3"/></svg>
<span class="t" style="left:1549.50px;width:300px;text-align:center;top:850.20px;font-size:4.1px;color:#5fb4c3;letter-spacing:0.1px;">go_register_button</span>
<div class="r" style="left:1435.60px;top:465.50px;width:1.40px;height:1.50px;background:#86e0ee;"></div>
<div class="r" style="left:1416px;top:927px;width:330px;height:0;border-top:2px dotted #4ea3c9;"></div>
<div class="r" style="left:1774px;top:799.5px;width:33.5px;height:35.5px;background:#2d2f31;border:1px solid #454749;border-radius:4px;box-sizing:border-box;"></div>
<div class="r" style="left:1774px;top:840.7px;width:33.5px;height:130.29999999999995px;background:#2d2f31;border:1px solid #454749;border-radius:4px;box-sizing:border-box;"></div>
<svg class="r" style="left:954.00px;top:199.30px;" width="19.6" height="19.6" viewBox="0 0 19.6 19.6"><path d="M9.8 0.3L19.3 6.4L9.8 12.5L0.3 6.4Z" fill="#0094c9"/><path d="M1.6 10.6L9.8 15.9L18 10.6L19.3 11.6L9.8 18.2L0.3 11.6Z" fill="#0094c9"/></svg>
<svg class="r" style="left:970.60px;top:218.40px;" width="5.6" height="3.2" viewBox="0 0 5.6 3.2"><path d="M0 0H5.6L2.8 3.2Z" fill="#d0d0d0"/></svg>
<div class="r" style="left:981.10px;top:197.50px;width:1.00px;height:23.50px;background:#515355;"></div>
<svg class="r" style="left:988.50px;top:198.50px;" width="21" height="21" viewBox="0 0 21 21"><g fill="none" stroke="#afb1b3" stroke-width="1.3"><rect x="5.6" y="3.6" width="9.6" height="13.8" rx="1.2" transform="rotate(-40 10.5 10.5)"/><path d="M12.4 1.2A9.4 9.4 0 0 1 19.6 8.6"/><path d="M8.6 19.8A9.4 9.4 0 0 1 1.4 12.4"/></g><path d="M19.9 5.9l0.9 3.9l-3.6-0.9z" fill="#afb1b3"/><path d="M1.1 15.1l-0.9-3.9l3.6 0.9z" fill="#afb1b3"/></svg>
<svg class="r" style="left:1005.60px;top:218.40px;" width="5.6" height="3.2" viewBox="0 0 5.6 3.2"><path d="M0 0H5.6L2.8 3.2Z" fill="#d0d0d0"/></svg>
<div class="r" style="left:1016.10px;top:197.50px;width:1.00px;height:23.50px;background:#515355;"></div>
<svg class="r" style="left:1026.00px;top:201.20px;" width="17" height="17" viewBox="0 0 17 17"><circle cx="8" cy="8" r="7.2" fill="#8f98a8" stroke="#afb1b3" stroke-width="1.3"/><path d="M13.2 3.2A7.2 7.2 0 0 1 5.2 14.4A7.4 7.4 0 0 0 13.2 3.2Z" fill="#3c3f41" stroke="#afb1b3" stroke-width="1"/></svg>
<svg class="r" style="left:1041.00px;top:218.40px;" width="5.6" height="3.2" viewBox="0 0 5.6 3.2"><path d="M0 0H5.6L2.8 3.2Z" fill="#d0d0d0"/></svg>
<div class="r" style="left:1051.80px;top:197.50px;width:1.00px;height:23.50px;background:#515355;"></div>
<svg class="r" style="left:1067.60px;top:202.00px;" width="11" height="15" viewBox="0 0 11 15"><rect x="0.8" y="0.8" width="9.2" height="13.4" rx="1.4" fill="none" stroke="#afb1b3" stroke-width="1.5"/><rect x="1" y="1" width="9" height="2" fill="#afb1b3"/><rect x="1" y="11.2" width="9" height="3" fill="#afb1b3"/><rect x="4.3" y="12.2" width="2.4" height="1.1" fill="#3c3f41"/></svg>
<span class="t" style="left:1085.80px;top:201.00px;font-size:16.5px;font-weight:400;color:#bbbbbb;font-family:'Liberation Sans', sans-serif;letter-spacing:-0.266px;">Pixel</span>
<svg class="r" style="left:1125.00px;top:206.93px;" width="11" height="6.95" viewBox="0 0 11 6.95"><path d="M1 1L5.50 5.95L10.00 1" stroke="#8c8e90" stroke-width="1.5" fill="none"/></svg>
<svg class="r" style="left:1146.80px;top:204.40px;" width="15.6" height="9.8" viewBox="0 0 15.6 9.8"><path d="M0.4 9.4A7.4 7.2 0 0 1 15.2 9.4Z" fill="#1fe07a"/><path d="M3.6 3.4L1.9 0.6M12 3.4L13.7 0.6" stroke="#1fe07a" stroke-width="1.1" stroke-linecap="round"/><circle cx="4.6" cy="6.3" r="0.75" fill="#3c3f41"/><circle cx="11" cy="6.3" r="0.75" fill="#3c3f41"/></svg>
<span class="t" style="left:1167.60px;top:201.00px;font-size:16.5px;font-weight:400;color:#bbbbbb;font-family:'Liberation Sans', sans-serif;letter-spacing:-0.159px;">32</span>
<svg class="r" style="left:1191.00px;top:207.04px;" width="10.599999999999909" height="6.729999999999951" viewBox="0 0 10.599999999999909 6.729999999999951"><path d="M1 1L5.30 5.73L9.60 1" stroke="#8c8e90" stroke-width="1.5" fill="none"/></svg>
<svg class="r" style="left:1213.60px;top:201.00px;" width="18" height="18" viewBox="0 0 18 18"><circle cx="9" cy="9" r="8.1" fill="none" stroke="#afb1b3" stroke-width="1.3"/><circle cx="9" cy="9" r="5" fill="none" stroke="#afb1b3" stroke-width="1.2"/><path d="M9 4A5 5 0 0 0 9 14Z" fill="#afb1b3"/></svg>
<span class="t" style="left:1235.60px;top:201.00px;font-size:16.5px;font-weight:400;color:#bbbbbb;font-family:'Liberation Sans', sans-serif;letter-spacing:-0.097px;">GuardDemo</span>
<svg class="r" style="left:1330.30px;top:206.93px;" width="11.0" height="6.95" viewBox="0 0 11.0 6.95"><path d="M1 1L5.50 5.95L10.00 1" stroke="#8c8e90" stroke-width="1.5" fill="none"/></svg>
<div class="r" style="left:1348.20px;top:197.50px;width:1.00px;height:23.50px;background:#515355;"></div>
<svg class="r" style="left:1361.00px;top:201.30px;" width="17" height="17" viewBox="0 0 17 17"><circle cx="8.5" cy="8.5" r="8.2" fill="#afb1b3"/><path d="M3 4.2C5 3 7.5 4 7.2 5.6C6.9 7 5 6.6 4.6 8C4.3 9.4 6.6 9.2 6.8 10.8C7 12.4 5.4 13 6 15.4C2.4 14 0.6 9 3 4.2Z" fill="#3c3f41"/><path d="M10.4 1.4C12.6 2 14.8 3.6 15.8 6.2C14.2 7 13.2 6 12.4 7C11.6 8 12.8 9 13.8 9.2C15 9.5 15.6 10.4 15.4 11.6C14.6 13.6 13 15 11.2 15.8C12 14 12.4 12.6 11 11.8C9.6 11 9 9.6 9.8 8.2C10.6 6.8 9.4 6 9.6 4.6C9.8 3.2 10.8 2.6 10.4 1.4Z" fill="#3c3f41"/></svg>
<span class="t" style="left:1382.80px;top:201.00px;font-size:16.5px;font-weight:400;color:#bbbbbb;font-family:'Liberation Sans', sans-serif;letter-spacing:0.005px;">Chinese (zh / CN)</span>
<svg class="r" style="left:1521.20px;top:206.87px;" width="11.200000000000045" height="7.060000000000025" viewBox="0 0 11.200000000000045 7.060000000000025"><path d="M1 1L5.60 6.06L10.20 1" stroke="#8c8e90" stroke-width="1.5" fill="none"/></svg>
<svg class="r" style="left:1800.50px;top:200.50px;" width="17.5" height="16.5" viewBox="0 0 17.5 16.5"><path d="M8.75 0.6L17.1 15.6H0.4Z" fill="#f6a21b"/><rect x="7.9" y="5.6" width="1.8" height="5.6" fill="#3c3f41"/><rect x="7.9" y="12.2" width="1.8" height="1.8" fill="#3c3f41"/></svg>
<svg class="r" style="left:954.80px;top:237.40px;" width="18" height="14.4" viewBox="0 0 18 14.4"><path d="M0.4 7.2C3 2.4 6 0.6 9 0.6C12 0.6 15 2.4 17.6 7.2C15 12 12 13.8 9 13.8C6 13.8 3 12 0.4 7.2Z" fill="#afb1b3"/><circle cx="9" cy="7.2" r="4.3" fill="#3c3f41"/><circle cx="9" cy="7.2" r="2.5" fill="#afb1b3"/></svg>
<svg class="r" style="left:970.80px;top:253.20px;" width="5.6" height="3.2" viewBox="0 0 5.6 3.2"><path d="M0 0H5.6L2.8 3.2Z" fill="#d0d0d0"/></svg>
<svg class="r" style="left:984.00px;top:236.00px;" width="17.5" height="17.5" viewBox="0 0 17.5 17.5"><path d="M1.6 5.2V9.4A6.6 6.6 0 0 0 14.8 9.4V5.2H11V9.4A2.8 2.8 0 0 1 5.4 9.4V5.2Z" fill="#afb1b3"/><rect x="1.6" y="2" width="3.8" height="3.4" fill="#0094c9"/><rect x="11" y="2" width="3.8" height="3.4" fill="#0094c9"/><path d="M0.8 0.8L16.6 16.6" stroke="#3c3f41" stroke-width="3.2"/><path d="M0.8 0.8L16.6 16.6" stroke="#afb1b3" stroke-width="1.4"/></svg>
<span class="t" style="left:1020.20px;top:236.00px;font-size:14.6px;font-weight:400;color:#bbbbbb;font-family:'Liberation Sans', sans-serif;letter-spacing:0.720px;">0dp</span>
<svg class="r" style="left:1011.50px;top:245.80px;" width="43.5" height="8.4" viewBox="0 0 43.5 8.4"><path d="M0.6 0.6V7.4H42.7V0.6" fill="none" stroke="#7d7f82" stroke-width="1.1"/></svg>
<div class="r" style="left:1061.10px;top:232.30px;width:1.00px;height:23.50px;background:#515355;"></div>
<svg class="r" style="left:1071.40px;top:235.60px;" width="20.4" height="18" viewBox="0 0 20.4 18"><path d="M3 14.4C9.4 14.4 6.6 3 13.2 3" fill="none" stroke="#afb1b3" stroke-width="1.4"/><circle cx="2.6" cy="14.6" r="2.2" fill="#afb1b3"/><circle cx="14" cy="2.8" r="2.2" fill="#afb1b3"/><path d="M12.6 10.2L18.6 16.4M18.6 10.2L12.6 16.4" stroke="#f26522" stroke-width="1.6"/></svg>
<svg class="r" style="left:1104.20px;top:235.60px;" width="18.6" height="17.6" viewBox="0 0 18.6 17.6"><path d="M1.2 15.8L10.4 6.6" stroke="#afb1b3" stroke-width="2.6"/><path d="M9.6 7.4L11.8 5.2" stroke="#e0e0e0" stroke-width="2.6"/><path d="M9.6 1V3.4M14 2.4L12.8 4M16.4 6.2L14.8 6.8M15.8 10.4L14.4 9.6M6 2.4L7.2 3.8" stroke="#0094c9" stroke-width="1.3"/></svg>
<div class="r" style="left:1132.70px;top:232.30px;width:1.00px;height:23.50px;background:#515355;"></div>
<svg class="r" style="left:1145.40px;top:235.80px;" width="11.2" height="17" viewBox="0 0 11.2 17"><path d="M0.4 1.1H10.8M0.4 15.9H10.8" stroke="#afb1b3" stroke-width="1.8"/><path d="M5.6 3.2V13.8" stroke="#afb1b3" stroke-width="1.5" stroke-dasharray="2.4 1.4"/></svg>
<svg class="r" style="left:1157.80px;top:253.20px;" width="5.6" height="3.2" viewBox="0 0 5.6 3.2"><path d="M0 0H5.6L2.8 3.2Z" fill="#d0d0d0"/></svg>
<div class="r" style="left:1801.8px;top:237.2px;width:14.6px;height:14.6px;border-radius:50%;background:#1b94d3;"></div>
<span class="t" style="left:1805.70px;top:240.00px;font-size:11.5px;font-weight:700;color:#2d3a45;font-family:'Liberation Sans', sans-serif;letter-spacing:0.000px;">?</span>
<svg class="r" style="left:153.00px;top:84.80px;" width="8.5" height="13" viewBox="0 0 8.5 13"><path d="M1.2 1.2L6.6 6.5L1.2 11.8" stroke="#717476" stroke-width="1.25" fill="none"/></svg>
<svg class="r" style="left:205.00px;top:84.80px;" width="8.5" height="13" viewBox="0 0 8.5 13"><path d="M1.2 1.2L6.6 6.5L1.2 11.8" stroke="#717476" stroke-width="1.25" fill="none"/></svg>
<svg class="r" style="left:251.30px;top:84.80px;" width="8.5" height="13" viewBox="0 0 8.5 13"><path d="M1.2 1.2L6.6 6.5L1.2 11.8" stroke="#717476" stroke-width="1.25" fill="none"/></svg>
<svg class="r" style="left:308.30px;top:84.80px;" width="8.5" height="13" viewBox="0 0 8.5 13"><path d="M1.2 1.2L6.6 6.5L1.2 11.8" stroke="#717476" stroke-width="1.25" fill="none"/></svg>
<svg class="r" style="left:354.30px;top:84.80px;" width="8.5" height="13" viewBox="0 0 8.5 13"><path d="M1.2 1.2L6.6 6.5L1.2 11.8" stroke="#717476" stroke-width="1.25" fill="none"/></svg>
<svg class="r" style="left:421.10px;top:84.80px;" width="8.5" height="13" viewBox="0 0 8.5 13"><path d="M1.2 1.2L6.6 6.5L1.2 11.8" stroke="#717476" stroke-width="1.25" fill="none"/></svg>
<svg class="r" style="left:586.50px;top:84.80px;" width="8.5" height="13" viewBox="0 0 8.5 13"><path d="M1.2 1.2L6.6 6.5L1.2 11.8" stroke="#717476" stroke-width="1.25" fill="none"/></svg>
<svg class="r" style="left:435.50px;top:82.60px;" width="18.6" height="18.6" viewBox="0 0 18.6 18.6"><path d="M3 9V6.2L8 1h7v8z" fill="#9aa7b0" opacity=".75"/><path d="M3.4 6.4L8 1.6v4.8z" fill="#c6ccd2"/><rect x="9.3" y="2.2" width="5" height="5.6" fill="#7a90b8" opacity=".8"/><rect x="0" y="9.4" width="18.6" height="8.6" fill="#d9731a"/><path d="M5.6 11.2L3.2 13.7L5.6 16.2M12.9 11.2L15.3 13.7L12.9 16.2" stroke="#7a3d0a" stroke-width="1.5" fill="none"/></svg>
<svg class="r" style="left:76.50px;top:124.20px;" width="18.042" height="18.042" viewBox="0 0 18.6 18.6"><path d="M3 9V6.2L8 1h7v8z" fill="#9aa7b0" opacity=".75"/><path d="M3.4 6.4L8 1.6v4.8z" fill="#c6ccd2"/><rect x="9.3" y="2.2" width="5" height="5.6" fill="#7a90b8" opacity=".8"/><rect x="0" y="9.4" width="18.6" height="8.6" fill="#d9731a"/><path d="M5.6 11.2L3.2 13.7L5.6 16.2M12.9 11.2L15.3 13.7L12.9 16.2" stroke="#7a3d0a" stroke-width="1.5" fill="none"/></svg>
<svg class="r" style="left:1005.50px;top:81.50px;" width="19.5" height="18.5" viewBox="0 0 19.5 18.5"><path d="M1.2 5.6L6 0.8C7.6 0.6 9.4 1.4 10.6 3L7.6 6L8.8 7.2L18.4 16.2L16.2 18.2L7 8.8L5.8 7.8L3.6 10Z" fill="#18a24c"/></svg>
<div class="r" style="left:1035.50px;top:79.50px;width:1.00px;height:24.00px;background:#515355;"></div>
<svg class="r" style="left:1060.80px;top:86.00px;" width="15.6" height="9.8" viewBox="0 0 15.6 9.8"><path d="M0.4 9.4A7.4 7.2 0 0 1 15.2 9.4Z" fill="#1fe07a"/><path d="M3.6 3.4L1.9 0.6M12 3.4L13.7 0.6" stroke="#1fe07a" stroke-width="1.1" stroke-linecap="round"/><circle cx="4.6" cy="6.3" r="0.75" fill="#3c3f41"/><circle cx="11" cy="6.3" r="0.75" fill="#3c3f41"/></svg>
<span class="t" style="left:1104.00px;top:86.00px;font-size:12.9px;font-weight:400;color:#bbbbbb;font-family:'Liberation Sans', sans-serif;letter-spacing:-0.598px;">APP</span>
<svg class="r" style="left:1164.00px;top:89.20px;" width="10" height="6" viewBox="0 0 10 6"><path d="M0 0H10L5.0 6Z" fill="#a8aaac"/></svg>
<svg class="r" style="left:1208.60px;top:83.20px;" width="16" height="17.6" viewBox="0 0 16 17.6"><rect x="0.9" y="0.9" width="9.2" height="14.2" rx="1.6" fill="none" stroke="#afb1b3" stroke-width="1.5"/><rect x="3.8" y="12.3" width="3.4" height="1.3" fill="#afb1b3"/><rect x="7.2" y="9" width="8" height="8.4" fill="#3c3f41"/><rect x="8.6" y="10.2" width="6.4" height="4.6" fill="none" stroke="#b07fd0" stroke-width="1.2"/><rect x="8" y="16" width="7.6" height="1.2" fill="#b07fd0"/></svg>
<span class="t" style="left:1248.00px;top:86.00px;font-size:12.9px;font-weight:400;color:#bbbbbb;font-family:'Liberation Sans', sans-serif;letter-spacing:0.171px;">PIXEL 3 XL API 31</span>
<svg class="r" style="left:1390.00px;top:89.20px;" width="10" height="6" viewBox="0 0 10 6"><path d="M0 0H10L5.0 6Z" fill="#a8aaac"/></svg>
<svg class="r" style="left:1427.60px;top:84.00px;" width="12.8" height="15" viewBox="0 0 12.8 15"><path d="M0.2 0.2L12.4 7.4L0.2 14.8Z" fill="#18a24c"/></svg>
<svg class="r" style="left:1456.00px;top:82.60px;" width="17" height="17.4" viewBox="0 0 17 17.4"><path d="M10.8 5.6A5.4 5.4 0 1 0 6.8 15.6" fill="none" stroke="#7f8183" stroke-width="2"/><path d="M10 0.2L16.4 5.2L10 10.2Z" fill="#7f8183"/><text x="9.2" y="17.2" font-size="9.4" font-weight="700" font-family="Liberation Sans, sans-serif" fill="#7f8183">A</text></svg>
<svg class="r" style="left:1489.00px;top:85.00px;" width="17.6" height="15" viewBox="0 0 17.6 15"><path d="M0 1H14.8M0 4.6H14.8M0 8.2H9.4M0 11.8H9.4" stroke="#7f8183" stroke-width="1.9"/><path d="M12.4 9.8H15A2.1 2.1 0 0 1 15 14H13.6" fill="none" stroke="#7f8183" stroke-width="1.2"/><path d="M13 7.8L10.8 9.8L13 11.8Z" fill="#7f8183"/></svg>
<svg class="r" style="left:1520.80px;top:83.00px;" width="15" height="16.8" viewBox="0 0 15 16.8"><path d="M7.5 3.4C10.6 3.4 12.2 6 12.2 9.6C12.2 13.6 10.4 16.4 7.5 16.4C4.6 16.4 2.8 13.6 2.8 9.6C2.8 6 4.4 3.4 7.5 3.4Z" fill="#18a24c"/><path d="M4.4 0.6L6.2 3.6M10.6 0.6L8.8 3.6M0.4 6.2L3.4 7.4M14.6 6.2L11.6 7.4M0 10.2H3.2M15 10.2H11.8M0.6 14.6L3.6 13M14.4 14.6L11.4 13" stroke="#18a24c" stroke-width="1.5"/><path d="M4.8 7.4H10.2M4.6 11.4H10.4" stroke="#3c3f41" stroke-width="1.3"/></svg>
<svg class="r" style="left:1550.60px;top:84.00px;" width="19" height="17" viewBox="0 0 19 17"><path d="M0.4 1.6L6.4 0.2L12 1.6V3.2H7.4V13.8C3 12.6 0.4 9 0.4 4.6Z" fill="#6f7173"/><path d="M9.6 6.4L18.6 11.6L9.6 16.8Z" fill="#7f8183"/></svg>
<svg class="r" style="left:1582.40px;top:84.40px;" width="18" height="12.4" viewBox="0 0 18 12.4"><path d="M1.6 11.8A7.6 7.6 0 0 1 10.6 1.6" fill="none" stroke="#1295d8" stroke-width="2.6"/><path d="M13.2 2.6A7.6 7.6 0 0 1 16.8 11.8" fill="none" stroke="#9a9c9e" stroke-width="2.6"/><path d="M7.4 11.4L13 2.8L10.4 12.2Z" fill="#c8c8c8"/></svg>
<svg class="r" style="left:1615.60px;top:83.00px;" width="18" height="18" viewBox="0 0 18 18"><path d="M7.5 3.4C10.6 3.4 12.2 6 12.2 9.6C12.2 13.6 10.4 16.4 7.5 16.4C4.6 16.4 2.8 13.6 2.8 9.6C2.8 6 4.4 3.4 7.5 3.4Z" fill="#18a24c"/><path d="M4.4 0.6L6.2 3.6M10.6 0.6L8.8 3.6M0.4 6.2L3.4 7.4M14.6 6.2L11.6 7.4M0 10.2H3.2M15 10.2H11.8M0.6 14.6L3.6 13M14.4 14.6L11.4 13" stroke="#18a24c" stroke-width="1.5"/><path d="M4.8 7.4H10.2M4.6 11.4H10.4" stroke="#3c3f41" stroke-width="1.3"/><rect x="8.4" y="9" width="9.6" height="9" fill="#3c3f41"/><path d="M9.6 17L15.8 10.8" stroke="#c4c4c4" stroke-width="2"/><path d="M11.4 9.8H17V15.4Z" fill="#c4c4c4"/></svg>
<div class="r" style="left:1648.60px;top:84.80px;width:12.40px;height:12.60px;background:#6f7071;"></div>
<div class="r" style="left:1674.10px;top:79.50px;width:1.00px;height:24.00px;background:#515355;"></div>
<svg class="r" style="left:1685.20px;top:84.00px;" width="19.4" height="17" viewBox="0 0 19.4 17"><path d="M0.6 13.6C0.4 8.4 2.4 3.6 7.2 3.2C9.6 3 10.8 4.2 12.4 4.2C13.6 4.2 14 2.2 15.8 1.6C17.6 1 18.8 2.4 18.6 4C18.4 5.8 16.8 6.4 15.8 5.8C16.6 5.4 17.2 4.6 17 3.8C16.8 3 15.8 3 15.4 3.8C14.8 5 15.2 7 14.4 8.8C13.8 10.2 12.2 10.6 11 10.4V13.6H8V10.8H5.6L5 13.6Z" fill="#a6a8aa"/><path d="M18.6 8.8L13 14.4" stroke="#1594d6" stroke-width="2.2"/><path d="M10.8 11V16.8H16.6Z" fill="#1594d6"/></svg>
<svg class="r" style="left:1719.80px;top:83.60px;" width="15.6" height="16.4" viewBox="0 0 15.6 16.4"><rect x="0.9" y="0.9" width="8.6" height="13.6" rx="1.5" fill="none" stroke="#afb1b3" stroke-width="1.5"/><rect x="4.2" y="8.6" width="11.4" height="8" fill="#3c3f41"/><path d="M5.4 16.2A4.9 4.9 0 0 1 15.2 16.2Z" fill="#1fe07a"/><path d="M7.4 11.8L6.4 10M13.2 11.8L14.2 10" stroke="#1fe07a" stroke-width="1"/></svg>
<svg class="r" style="left:1748.60px;top:83.00px;" width="19.2" height="18.2" viewBox="0 0 19.2 18.2"><path d="M6.4 0.4L12.4 3V9.6L6.4 12.6L0.4 9.6V3Z" fill="#a4a6a8"/><path d="M0.8 3.2L6.4 5.8L12 3.2M6.4 5.8V12.2" stroke="#3c3f41" stroke-width="1" fill="none"/><path d="M15 6.6V15" stroke="#1594d6" stroke-width="2.2"/><path d="M10.8 12.2H19.2L15 17.6Z" fill="#1594d6"/></svg>
<div class="r" style="left:1777.40px;top:79.50px;width:1.00px;height:24.00px;background:#515355;"></div>
<svg class="r" style="left:1789.40px;top:82.80px;" width="18" height="17.6" viewBox="0 0 18 17.6"><circle cx="7" cy="7" r="5.6" fill="none" stroke="#afb1b3" stroke-width="2"/><path d="M11 11L16.6 16.6" stroke="#afb1b3" stroke-width="2.4"/></svg>
<div class="r" style="left:1820px;top:81.3px;width:19.8px;height:19.8px;border-radius:50%;background:#1294d2;"></div>
<svg class="r" style="left:1824.40px;top:85.40px;" width="11" height="11.6" viewBox="0 0 11 11.6"><path d="M5.5 0.4L10.6 5.8H6.8V11.4H4.2V5.8H0.4Z" fill="#fff"/></svg>
<div class="r" style="left:1851.60px;top:81.30px;width:19.60px;height:19.70px;background:#d4d4d4;"></div>
<svg class="r" style="left:1851.60px;top:81.30px;" width="19.6" height="19.7" viewBox="0 0 19.6 19.7"><circle cx="9.8" cy="7.4" r="3.8" fill="#fff"/><path d="M3 19.7V16.4C3 13.6 5.6 12.4 9.8 12.4C14 12.4 16.6 13.6 16.6 16.4V19.7Z" fill="#fff"/></svg>
<div class="r" style="left:66.30px;top:190.60px;width:1787.20px;height:0.90px;background:#323232;"></div>
<svg class="r" style="left:1643.60px;top:169.00px;" width="15" height="13.2" viewBox="0 0 15 13.2"><path d="M0 0.9H15M0 3.75H15M0 6.6H15M0 9.45H15M0 12.3H15" stroke="#afb1b3" stroke-width="1.5"/></svg>
<svg class="r" style="left:1713.00px;top:168.60px;" width="15.2" height="13.6" viewBox="0 0 15.2 13.6"><path d="M0 0.9H5.4M0 3.8H5.4M0 6.7H5.4M0 9.6H5.4M0 12.5H5.4" stroke="#b6bfd0" stroke-width="1.6"/><rect x="7" y="0" width="8" height="13.4" fill="#aab6d0"/></svg>
<svg class="r" style="left:1774.80px;top:167.80px;" width="15.4" height="14.8" viewBox="0 0 15.4 14.8"><rect x="0" y="0" width="15.4" height="14.8" fill="#afb1b3"/><path d="M1.8 11.6L5.6 6.2L8 9.4L10.6 6.6L13.6 11.6Z" fill="#3c3f41"/></svg>
<svg class="r" style="left:835.00px;top:200.60px;" width="14.6" height="13.8" viewBox="0 0 14.6 13.8"><path d="M7.3 0.4L14.3 13.4H0.3Z" fill="#e08a1c"/><rect x="6.5" y="4.4" width="1.7" height="5" fill="#3a2a10"/><rect x="6.5" y="10.4" width="1.7" height="1.7" fill="#3a2a10"/></svg>
<span class="t" style="left:853.20px;top:202.00px;font-size:13.6px;font-weight:400;color:#bbbbbb;font-family:'Liberation Sans', sans-serif;letter-spacing:0.000px;">1</span>
<svg class="r" style="left:871.30px;top:203.50px;" width="12" height="8.4" viewBox="0 0 12 8.4"><path d="M1 7.4L6 1.6L11 7.4" stroke="#b4b4b4" stroke-width="1.5" fill="none"/></svg>
<svg class="r" style="left:896.90px;top:204.50px;" width="12.4" height="8.6" viewBox="0 0 12.4 8.6"><path d="M1 1L6.2 7L11.4 1" stroke="#b4b4b4" stroke-width="1.5" fill="none"/></svg>
<div class="r" style="left:900.20px;top:297.80px;width:17.30px;height:2.60px;background:#d9761c;"></div>
<div class="r" style="left:905.00px;top:886.00px;width:8.90px;height:92.80px;background:rgba(128,128,128,.32);border-radius:4.5px;"></div>
<svg class="r" style="left:139.60px;top:244.78px;" width="11.2" height="13.4" viewBox="0 0 11.2 13.4"><path d="M0.7 12.700000000000001H10.5V5L5.6 0.6L0.7 5Z" fill="#2b2b2b" stroke="#606366" stroke-width="1.2"/><path d="M3.2 8.8H7.999999999999999" stroke="#606366" stroke-width="1.3"/></svg>
<svg class="r" style="left:139.60px;top:300.87px;" width="11.2" height="13.4" viewBox="0 0 11.2 13.4"><path d="M0.7 0.7H10.5V8.4L5.6 12.8L0.7 8.4Z" fill="#2b2b2b" stroke="#606366" stroke-width="1.2"/><path d="M3.2 4.6H7.999999999999999" stroke="#606366" stroke-width="1.3"/></svg>
<svg class="r" style="left:139.60px;top:619.21px;" width="11.2" height="13.4" viewBox="0 0 11.2 13.4"><path d="M0.7 12.700000000000001H10.5V5L5.6 0.6L0.7 5Z" fill="#2b2b2b" stroke="#606366" stroke-width="1.2"/><path d="M3.2 8.8H7.999999999999999" stroke="#606366" stroke-width="1.3"/></svg>
<svg class="r" style="left:139.60px;top:675.30px;" width="11.2" height="13.4" viewBox="0 0 11.2 13.4"><path d="M0.7 0.7H10.5V8.4L5.6 12.8L0.7 8.4Z" fill="#2b2b2b" stroke="#606366" stroke-width="1.2"/><path d="M3.2 4.6H7.999999999999999" stroke="#606366" stroke-width="1.3"/></svg>
<svg class="r" style="left:139.60px;top:886.66px;" width="11.2" height="13.4" viewBox="0 0 11.2 13.4"><path d="M0.7 12.700000000000001H10.5V5L5.6 0.6L0.7 5Z" fill="#2b2b2b" stroke="#606366" stroke-width="1.2"/><path d="M3.2 8.8H7.999999999999999" stroke="#606366" stroke-width="1.3"/></svg>
<svg class="r" style="left:139.60px;top:966.90px;" width="11.2" height="13.4" viewBox="0 0 11.2 13.4"><path d="M0.7 12.700000000000001H10.5V5L5.6 0.6L0.7 5Z" fill="#2b2b2b" stroke="#606366" stroke-width="1.2"/><path d="M3.2 8.8H7.999999999999999" stroke="#606366" stroke-width="1.3"/></svg>
<svg class="r" style="left:162.60px;top:292.40px;" width="13.4" height="18" viewBox="0 0 13.4 18"><path d="M6.7 0.4A6.2 6.2 0 0 1 10.4 11.6V12.4H3V11.6A6.2 6.2 0 0 1 6.7 0.4Z" fill="#f7a007"/><path d="M3.4 13.6H10M3.4 15.4H10M4.6 17.2H8.8" stroke="#9da0a2" stroke-width="1.3"/></svg>
<svg class="r" style="left:45.80px;top:170.40px;" width="14.6" height="11" viewBox="0 0 14.6 11"><path d="M0 0H5.6L7.4 2.2H14.6V11H0Z" fill="#c8cacc"/></svg>
<svg class="r" style="left:45.80px;top:333.60px;" width="14.6" height="14.6" viewBox="0 0 14.6 14.6"><path d="M7.4 0.4L11 6.6H3.8Z" fill="#afb1b3"/><rect x="0.4" y="8" width="6" height="6.2" fill="#afb1b3"/><circle cx="11" cy="11.2" r="3.2" fill="#afb1b3"/></svg>
<svg class="r" style="left:47.20px;top:758.60px;" width="12" height="11.4" viewBox="0 0 12 11.4"><rect x="0" y="5.8" width="5" height="5.4" fill="#afb1b3"/><rect x="6.6" y="0" width="5.4" height="5" fill="#afb1b3"/><rect x="6.6" y="6" width="5.4" height="5.2" fill="#afb1b3"/></svg>
<svg class="r" style="left:45.40px;top:860.40px;" width="15" height="14.6" viewBox="0 0 15 14.6"><path d="M7.5 0.3L9.7 5.2L15 5.8L11 9.4L12.2 14.5L7.5 11.8L2.8 14.5L4 9.4L0 5.8L5.3 5.2Z" fill="#d4d4d4"/></svg>
<svg class="r" style="left:46.20px;top:993.60px;" width="13.8" height="11.2" viewBox="0 0 13.8 11.2"><path d="M0.2 11A6.8 6.6 0 0 1 13.6 11Z" fill="#d0d0d0"/><path d="M3.2 5L1.2 0.8H2.8L5 4.4M10.6 5L12.6 0.8H11L8.8 4.4" fill="#d0d0d0"/></svg>
<svg class="r" style="left:928.00px;top:254.40px;" width="14.2" height="15" viewBox="0 0 14.2 15"><rect x="0" y="9.4" width="14.2" height="5.4" rx="0.8" fill="#c8cacc"/><circle cx="11.4" cy="12.1" r="1.2" fill="#3c3f41"/><path d="M2 8.4L2.6 3.6L7 8.4Z M5.4 3.2L9.4 0.8L10.4 8.4L8 8.4Z M10.8 0.4L14.2 0.6L13 8.2H11.6Z" fill="#c8cacc"/></svg>
<svg class="r" style="left:927.60px;top:965.60px;" width="14" height="14" viewBox="0 0 14 14"><circle cx="7" cy="7" r="6.8" fill="#c8cacc"/><path d="M2.6 3.4C4.2 2.4 6.2 3.2 6 4.6C5.8 5.8 4.2 5.4 3.8 6.6C3.6 7.8 5.4 7.6 5.6 9C5.8 10.2 4.4 10.8 5 12.6C2.2 11.6 0.8 7.4 2.6 3.4Z" fill="#3c3f41"/><path d="M8.6 1.2C10.4 1.6 12.2 3 13 5.2C11.6 5.8 10.8 5 10.2 5.8C9.6 6.6 10.6 7.4 11.4 7.6C12.4 7.8 12.8 8.6 12.6 9.6C12 11.2 10.8 12.4 9.2 13C9.8 11.6 10.2 10.4 9 9.8C8 9.2 7.4 8 8.2 6.8C8.8 5.6 7.8 5 8 3.8C8.2 2.6 9 2.2 8.6 1.2Z" fill="#3c3f41"/></svg>
<svg class="r" style="left:1858.80px;top:123.20px;" width="16.2" height="12" viewBox="0 0 16.2 12"><path d="M0.4 11.6C0.2 7.4 1.8 3.6 5.8 3.2C7.8 3 8.8 4 10.2 4C11.2 4 11.6 2.4 13 1.8C14.6 1.2 15.6 2.4 15.4 3.8C15.2 5.2 14 5.8 13 5.2C13.8 4.8 14.2 4.2 14 3.6C13.8 3 13 3 12.6 3.6C12.2 4.6 12.4 6.2 11.8 7.6C11.4 8.8 10 9.2 9 9V11.6H6.6V9.4H4.6L4.2 11.6Z" fill="#afb1b3"/></svg>
<svg class="r" style="left:1859.60px;top:210.20px;" width="14.6" height="15.4" viewBox="0 0 14.6 15.4"><path d="M10 0.8H2.2A1.4 1.4 0 0 0 0.8 2.2V10.2A1.4 1.4 0 0 0 2.2 11.6H5" fill="none" stroke="#afb1b3" stroke-width="1.5"/><rect x="6.2" y="3.4" width="7.2" height="11" rx="1.2" fill="none" stroke="#afb1b3" stroke-width="1.5"/><rect x="12" y="0" width="2.4" height="3" fill="#afb1b3"/><rect x="8.4" y="11.4" width="2.8" height="1.2" fill="#afb1b3"/></svg>
<svg class="r" style="left:1859.60px;top:368.40px;" width="14.6" height="15.4" viewBox="0 0 14.6 15.4"><path d="M10 0.8H2.2A1.4 1.4 0 0 0 0.8 2.2V10.2A1.4 1.4 0 0 0 2.2 11.6H5" fill="none" stroke="#afb1b3" stroke-width="1.5"/><rect x="6.2" y="3.4" width="7.2" height="11" rx="1.2" fill="none" stroke="#afb1b3" stroke-width="1.5"/><rect x="12" y="0" width="2.4" height="3" fill="#afb1b3"/><rect x="8.4" y="11.4" width="2.8" height="1.2" fill="#afb1b3"/></svg>
<svg class="r" style="left:1859.60px;top:761.60px;" width="14.6" height="15.4" viewBox="0 0 14.6 15.4"><path d="M10 0.8H2.2A1.4 1.4 0 0 0 0.8 2.2V10.2A1.4 1.4 0 0 0 2.2 11.6H5" fill="none" stroke="#afb1b3" stroke-width="1.5"/><rect x="6.2" y="3.4" width="7.2" height="11" rx="1.2" fill="none" stroke="#afb1b3" stroke-width="1.5"/><rect x="12" y="0" width="2.4" height="3" fill="#afb1b3"/><rect x="8.4" y="11.4" width="2.8" height="1.2" fill="#afb1b3"/></svg>
<svg class="r" style="left:1860.40px;top:866.00px;" width="12.6" height="15.6" viewBox="0 0 12.6 15.6"><rect x="0.8" y="0.8" width="11" height="14" rx="1.6" fill="none" stroke="#afb1b3" stroke-width="1.5"/><rect x="1" y="1" width="10.6" height="2.2" fill="#afb1b3"/><rect x="1" y="11.6" width="10.6" height="3" fill="#afb1b3"/></svg>
<svg class="r" style="left:1833.60px;top:206.60px;" width="14.6" height="14" viewBox="0 0 14.6 14"><path d="M0 2.4H14.6M0 7H14.6M0 11.6H14.6" stroke="#afb1b3" stroke-width="1.2"/><circle cx="10" cy="2.4" r="2" fill="#afb1b3"/><circle cx="4.6" cy="7" r="2" fill="#afb1b3"/><circle cx="7.6" cy="11.6" r="2" fill="#afb1b3"/></svg>
<svg class="r" style="left:1782.60px;top:808.60px;" width="16.2" height="17.4" viewBox="0 0 16.2 17.4"><path d="M5.2 9V2.2A1.1 1.1 0 0 1 7.4 2.2V1.2A1.1 1.1 0 0 1 9.6 1.2V2A1.1 1.1 0 0 1 11.8 2V3.4A1.1 1.1 0 0 1 14 3.4V11.4C14 15 12 17 9 17C6.4 17 5 15.8 3.6 13.6L0.6 9C0.2 8 1.4 7.2 2.2 8L5.2 11Z" fill="#cfcfcf"/><path d="M7.4 2.4V8M9.6 2.2V8M11.8 3.2V8" stroke="#2d2f31" stroke-width="0.6"/></svg>
<svg class="r" style="left:1784.40px;top:852.20px;" width="12.8" height="12.8" viewBox="0 0 12.8 12.8"><path d="M6.4 0V12.8M0 6.4H12.8" stroke="#d2d2d2" stroke-width="2"/></svg>
<div class="r" style="left:1785.00px;top:888.80px;width:12.00px;height:2.00px;background:#d2d2d2;"></div>
<span class="t" style="left:1783.40px;top:916.00px;font-size:12.2px;font-weight:700;color:#d2d2d2;font-family:'Liberation Sans', sans-serif;letter-spacing:0.000px;transform:scaleX(0.84);transform-origin:0 0;">1:1</span>
<svg class="r" style="left:1782.00px;top:945.60px;" width="17.8" height="14.4" viewBox="0 0 17.8 14.4"><rect x="0.9" y="0.9" width="16" height="12.6" fill="none" stroke="#d2d2d2" stroke-width="1.6"/><path d="M4 7V4.2H7M10.8 10.2H13.8V7.4" fill="none" stroke="#d2d2d2" stroke-width="1.3"/></svg>
<svg class="r" style="left:78.80px;top:1031.20px;" width="13.2" height="10.6" viewBox="0 0 13.2 10.6"><path d="M0 1H2.2M0 5.3H2.2M0 9.6H2.2" stroke="#b8babc" stroke-width="2"/><path d="M4 1H13.2M4 5.3H13.2M4 9.6H13.2" stroke="#b8babc" stroke-width="2"/></svg>
<svg class="r" style="left:160.80px;top:1029.00px;" width="13.4" height="13.4" viewBox="0 0 13.4 13.4"><circle cx="6.7" cy="6.7" r="6.5" fill="#b8babc"/><rect x="5.8" y="2.8" width="1.9" height="5" fill="#3c3f41"/><rect x="5.8" y="8.8" width="1.9" height="1.9" fill="#3c3f41"/></svg>
<svg class="r" style="left:264.80px;top:1029.00px;" width="14.4" height="13" viewBox="0 0 14.4 13"><rect x="0" y="0" width="14.4" height="13" fill="#b8babc"/><path d="M2.4 3.2L6 6.2L2.4 9.2" stroke="#3c3f41" stroke-width="1.5" fill="none"/><path d="M7 10H12" stroke="#3c3f41" stroke-width="1.5"/></svg>
<svg class="r" style="left:363.80px;top:1032.00px;" width="13.6" height="10.2" viewBox="0 0 13.6 10.2"><path d="M0 1.1H13.4M0 5.1H8.2M0 9.1H11" stroke="#b8babc" stroke-width="2.1"/></svg>
<svg class="r" style="left:449.60px;top:1031.60px;" width="16.8" height="10.8" viewBox="0 0 16.8 10.8"><path d="M1.6 10.4A7 7 0 0 1 11 2.6" fill="none" stroke="#b8babc" stroke-width="2.4"/><path d="M13.4 4A7 7 0 0 1 15.4 10.4" fill="none" stroke="#b8babc" stroke-width="2.4"/><path d="M7 10.2L12.2 2.6L9.8 10.8Z" fill="#b8babc"/></svg>
<svg class="r" style="left:544.80px;top:1029.60px;" width="14" height="15" viewBox="0 0 14 15"><path d="M3.4 3A3.6 3.6 0 0 1 10.6 3V10.6H12.4V14.6H1.6V10.6H3.4Z" fill="#b8babc"/><path d="M0 4.2H3.6M0 7.8H3.6M10.4 4.2H14M10.4 7.8H14M1.6 12.2H12.4" stroke="#b8babc" stroke-width="1.3"/><path d="M2.6 11.2H11.4" stroke="#3c3f41" stroke-width="0.9"/></svg>
<svg class="r" style="left:1604.60px;top:1028.00px;" width="16.6" height="16.6" viewBox="0 0 16.6 16.6"><path d="M8.2 1A7.3 7.3 0 0 1 15.5 8.3V15.6H8.2A7.3 7.3 0 0 1 8.2 1Z" fill="none" stroke="#b8babc" stroke-width="1.5"/></svg>
<svg class="r" style="left:1714.80px;top:1028.00px;" width="17" height="15.6" viewBox="0 0 17 15.6"><path d="M0.6 7V0.7H11.4" fill="none" stroke="#b8babc" stroke-width="1.3"/><path d="M3.4 10.2V3.6H14.4V5.4" fill="none" stroke="#b8babc" stroke-width="1.3"/><path d="M3.4 10.2H6" stroke="#b8babc" stroke-width="1.3"/><circle cx="10.6" cy="9.6" r="3.2" fill="none" stroke="#b8babc" stroke-width="1.4"/><path d="M12.8 12L16.2 15.2" stroke="#b8babc" stroke-width="1.6"/></svg>
<svg class="r" style="left:47.20px;top:1062.00px;" width="15.4" height="15.6" viewBox="0 0 15.4 15.6"><rect x="3.4" y="0.7" width="11.2" height="11.2" fill="none" stroke="#b8babc" stroke-width="1.3"/><path d="M0.7 3.6V14.8H11.8" fill="none" stroke="#b8babc" stroke-width="1.3"/></svg>
<svg class="r" style="left:1827.00px;top:1061.00px;" width="17.6" height="17.6" viewBox="-8.8 -8.8 17.6 17.6"><circle cx="0" cy="0" r="8.7" fill="#b4b4b4"/><ellipse cx="-2.8" cy="-2.4" rx="1" ry="1.6" fill="#3c3f41"/><ellipse cx="2.8" cy="-2.4" rx="1" ry="1.6" fill="#3c3f41"/><path d="M-4.2 1.8Q0 6.4 4.2 1.8" stroke="#3c3f41" stroke-width="1.5" fill="none"/></svg>
<svg class="r" style="left:1856.20px;top:1061.00px;" width="17.6" height="17.6" viewBox="-8.8 -8.8 17.6 17.6"><circle cx="0" cy="0" r="8.7" fill="#b4b4b4"/><ellipse cx="-2.8" cy="-2.4" rx="1" ry="1.6" fill="#3c3f41"/><ellipse cx="2.8" cy="-2.4" rx="1" ry="1.6" fill="#3c3f41"/><path d="M-3.8 4.6Q0 0.6 3.8 4.6" stroke="#3c3f41" stroke-width="1.5" fill="none"/></svg>
</div></div>
</body></html>
